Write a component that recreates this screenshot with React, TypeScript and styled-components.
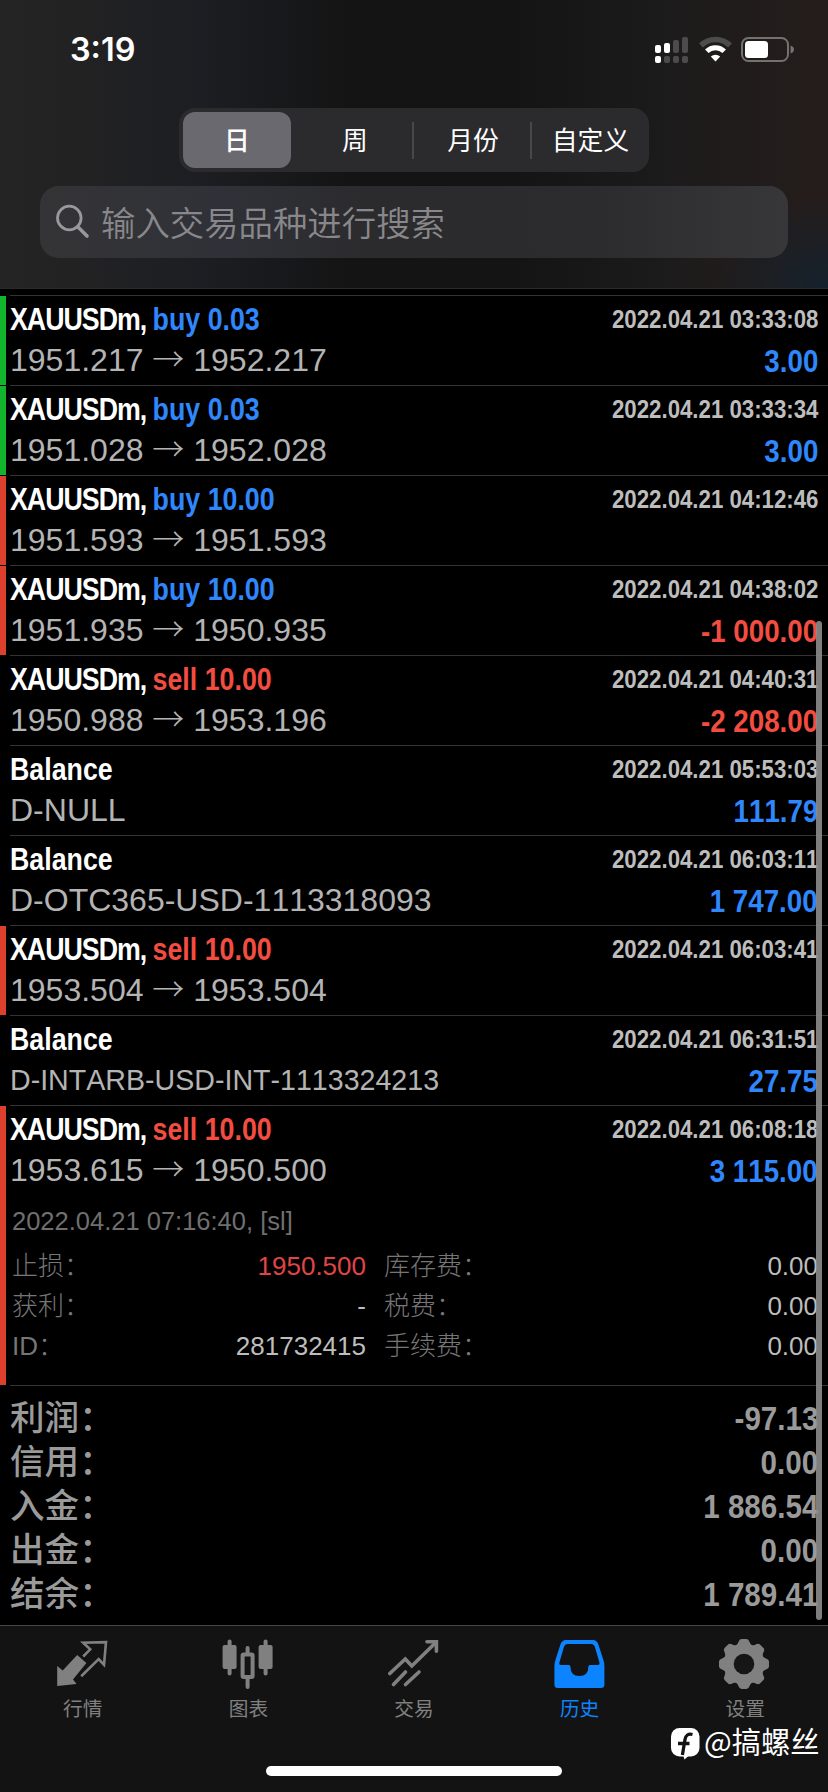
import React from "react";
import styled, { createGlobalStyle } from "styled-components";

const BLUE = "#2f87fb";
const RED = "#f24d40";

const GlobalStyle = createGlobalStyle`
  * { box-sizing: border-box; }
  body { margin: 0; background: #000; font-kerning: none; }
`;

const Screen = styled.main`
  width: 828px;
  height: 1792px;
  position: relative;
  display: flex;
  flex-direction: column;
  overflow: hidden;
  background: #000;
  font-family: "Liberation Sans", "Noto Sans CJK SC", sans-serif;
`;

const Header = styled.header`
  height: 289px;
  flex: none;
  display: flex;
  flex-direction: column;
  border-bottom: 1px solid #2a2a2a;
  background:
    radial-gradient(ellipse 110px 90px at 100% 100%, #15222d 0%, transparent 100%),
    linear-gradient(90deg, #242424 0%, #222223 10%, #1c1e23 24%, #141414 42%, #141414 62%, #1c1b1b 80%, #251d1c 100%);
`;

const StatusBar = styled.div`
  height: 108px;
  padding: 0 33px 0 70px;
  display: flex;
  justify-content: space-between;
`;

const Clock = styled.div`
  font: 600 32.4px/38px Inter, sans-serif;
  color: #fff;
  margin-top: 31px;
`;

const StatusIcons = styled.div`
  display: flex;
  margin-top: 36px;
`;

const Segments = styled.nav`
  align-self: center;
  width: 470px;
  height: 64px;
  display: flex;
  padding: 4px 0 4px 4px;
  border-radius: 16px;
  background: #2b2b2e;
`;

const Segment = styled.div<{ $active?: boolean; $divided?: boolean }>`
  width: ${(p) => (p.$active ? 108 : p.$divided ? 118 : 117)}px;
  margin-right: ${(p) => (p.$active ? 5 : 0)}px;
  padding-bottom: 3px;
  flex: none;
  display: flex;
  align-items: center;
  justify-content: center;
  border-radius: ${(p) => (p.$active ? "12px" : "0")};
  background: ${(p) =>
    p.$active
      ? "#69696f"
      : p.$divided
        ? "linear-gradient(#48484b, #48484b) right center / 2px 37px no-repeat"
        : "none"};
  color: #fff;
  font-family: "Noto Sans CJK SC", sans-serif;
  font-size: 25.8px;
  font-weight: ${(p) => (p.$active ? 500 : 400)};
  line-height: 38px;
`;

const SearchField = styled.div`
  margin: 14px 40px 0;
  height: 72px;
  border-radius: 19px;
  padding: 0 0 3px 15px;
  display: flex;
  align-items: center;
  gap: 11px;
  background: linear-gradient(90deg, #343436 0%, #303138 24%, #2b2b2d 45%, #2c2c2e 75%, #37373a 100%);
  color: #88888c;
  font-family: "Noto Sans CJK SC", sans-serif;
  font-size: 34.4px;
  font-weight: 350;
  line-height: 50px;
`;

const List = styled.section`
  padding-top: 6px;
  display: flex;
  flex-direction: column;
`;

const Deal = styled.article<{ $bar?: string; $tall?: boolean }>`
  height: ${(p) => (p.$tall ? 280 : 90)}px;
  padding: 1px 10px 0 10px;
  background:
    linear-gradient(#333, #333) 10px 0 / 100% 1px no-repeat,
    linear-gradient(${(p) => p.$bar ?? "#000"}, ${(p) => p.$bar ?? "#000"}) 0 1px / 6px 100% no-repeat;
`;

const Line = styled.div<{ $h: number }>`
  display: flex;
  justify-content: space-between;
  height: ${(p) => p.$h}px;
  line-height: ${(p) => p.$h}px;
  white-space: nowrap;
`;

const Title = styled.div`
  font-size: 31.5px;
  font-weight: 700;
  color: #fff;
  transform: scaleX(0.85);
  transform-origin: left;
`;

const Symbol = styled.span`
  letter-spacing: -1.2px;
`;

const Side = styled.span<{ $color: string }>`
  color: ${(p) => p.$color};
`;

const Stamp = styled.time`
  font-size: 26px;
  font-weight: 700;
  color: #bdbdbd;
  transform: scaleX(0.855);
  transform-origin: right;
`;

const Detail = styled.div<{ $size?: number }>`
  font-size: ${(p) => p.$size ?? 32}px;
  color: #b4b4b4;
`;

const Arrow = styled.span`
  font-family: "Noto Sans CJK SC", sans-serif;
  font-weight: 300;
  line-height: 0;
`;

const Profit = styled.div<{ $color: string }>`
  font-size: 31.5px;
  font-weight: 700;
  color: ${(p) => p.$color};
  transform: translateY(1px) scaleX(0.88);
  transform-origin: right;
`;

const ClosedAt = styled.div`
  margin-top: 12px;
  padding-left: 2px;
  height: 40px;
  font-size: 25.5px;
  line-height: 40px;
  color: #6f6f6f;
`;

const Facts = styled.dl`
  margin: 5px 0 0;
  padding-left: 2px;
  display: grid;
  grid-template-columns: 354px 1fr;
  column-gap: 18px;
  grid-auto-rows: 40px;
`;

const Fact = styled.div`
  display: flex;
  justify-content: space-between;
  font-size: 26px;
  line-height: 40px;
`;

const FactName = styled.dt`
  color: #767676;
  font-weight: 300;
`;

const FactValue = styled.dd<{ $color?: string }>`
  margin: 0;
  color: ${(p) => p.$color ?? "#bdbdbd"};
`;

const Totals = styled.section`
  height: 240px;
  padding: 11px 10px 0;
  background: linear-gradient(#333, #333) 10px 0 / 100% 1px no-repeat;
`;

const TotalName = styled.div`
  font-size: 34.6px;
  font-weight: 500;
  color: #9a9a9a;
`;

const TotalValue = styled.div`
  font-size: 34px;
  font-weight: 700;
  color: #9a9a9a;
  transform: scaleX(0.87);
  transform-origin: right;
`;

const TabBar = styled.nav`
  height: 167px;
  flex: none;
  display: grid;
  grid-template-columns: repeat(5, 1fr);
  padding-top: 14px;
  background: linear-gradient(#484848, #484848) 0 0 / 100% 1px no-repeat, #131313;
`;

const Tab = styled.div<{ $active?: boolean }>`
  display: flex;
  flex-direction: column;
  align-items: center;
  color: ${(p) => (p.$active ? "#0d84ff" : "#808080")};
  font: 400 19.7px/30px "Noto Sans CJK SC", sans-serif;
  gap: 2px;
`;

const HomeIndicator = styled.div`
  position: absolute;
  left: 266px;
  top: 1766px;
  width: 296px;
  height: 10px;
  border-radius: 5px;
  background: #fff;
`;

const ScrollThumb = styled.div`
  position: absolute;
  left: 816px;
  top: 621px;
  width: 6px;
  height: 999px;
  border-radius: 3px;
  background: rgba(140, 140, 140, 0.9);
`;

const Watermark = styled.div`
  position: absolute;
  left: 671px;
  top: 1719px;
  display: flex;
  align-items: flex-start;
  gap: 4px;
  white-space: nowrap;
  color: #fff;
  font: 400 29.3px/42px "Noto Sans CJK SC", sans-serif;

  svg {
    margin-top: 8px;
  }
`;

type DealRow = {
  side?: "buy" | "sell";
  volume?: string;
  open?: string;
  close?: string;
  note?: string;
  noteSize?: number;
  time: string;
  profit?: string;
  bar?: string;
};

const GREEN_BAR = "#12b62c";
const RED_BAR = "#dd402c";

const deals: DealRow[] = [
  { side: "buy", volume: "0.03", open: "1951.217", close: "1952.217", time: "2022.04.21 03:33:08", profit: "3.00", bar: GREEN_BAR },
  { side: "buy", volume: "0.03", open: "1951.028", close: "1952.028", time: "2022.04.21 03:33:34", profit: "3.00", bar: GREEN_BAR },
  { side: "buy", volume: "10.00", open: "1951.593", close: "1951.593", time: "2022.04.21 04:12:46", bar: RED_BAR },
  { side: "buy", volume: "10.00", open: "1951.935", close: "1950.935", time: "2022.04.21 04:38:02", profit: "-1 000.00", bar: RED_BAR },
  { side: "sell", volume: "10.00", open: "1950.988", close: "1953.196", time: "2022.04.21 04:40:31", profit: "-2 208.00" },
  { note: "D-NULL", time: "2022.04.21 05:53:03", profit: "111.79" },
  { note: "D-OTC365-USD-1113318093", time: "2022.04.21 06:03:11", profit: "1 747.00" },
  { side: "sell", volume: "10.00", open: "1953.504", close: "1953.504", time: "2022.04.21 06:03:41", bar: RED_BAR },
  { note: "D-INTARB-USD-INT-1113324213", noteSize: 28.6, time: "2022.04.21 06:31:51", profit: "27.75" },
  { side: "sell", volume: "10.00", open: "1953.615", close: "1950.500", time: "2022.04.21 06:08:18", profit: "3 115.00", bar: RED_BAR },
];

const facts = [
  ["止损：", "1950.500", "#e04545"],
  ["库存费：", "0.00"],
  ["获利：", "-"],
  ["税费：", "0.00"],
  ["ID：", "281732415"],
  ["手续费：", "0.00"],
];

const totals = [
  ["利润：", "-97.13"],
  ["信用：", "0.00"],
  ["入金：", "1 886.54"],
  ["出金：", "0.00"],
  ["结余：", "1 789.41"],
];

const StatusGlyphs = () => (
  <svg width="142" height="30" viewBox="653 36 142 30">
    <g fill="#fff">
      <rect x="655" y="45" width="6" height="8" rx="2" />
      <rect x="664" y="43" width="6" height="10" rx="2" />
      <rect x="655" y="56" width="6" height="7" rx="2" />
    </g>
    <g fill="#4d4c4c">
      <rect x="673" y="40" width="6" height="13" rx="2" />
      <rect x="682" y="37" width="6" height="16" rx="2" />
      <rect x="664" y="56" width="6" height="7" rx="2" />
      <rect x="673" y="56" width="6" height="7" rx="2" />
      <rect x="682" y="56" width="6" height="7" rx="2" />
    </g>
    <path d="M701 45.5a20.5 20.5 0 0 1 29 0" fill="none" stroke="#4d4c4c" strokeWidth="5.4" />
    <path d="M706.8 51.2a12.4 12.4 0 0 1 17.4 0" fill="none" stroke="#fff" strokeWidth="5" />
    <path d="M710.8 56.6a7 7 0 0 1 9.4 0L715.5 61.5Z" fill="#fff" />
    <rect x="742" y="38" width="46" height="23" rx="6.5" fill="none" stroke="#757170" strokeWidth="2" />
    <rect x="745" y="41" width="23" height="17" rx="3.5" fill="#fff" />
    <path d="M790.5 45.5q3.5 1.2 3.5 4t-3.5 4Z" fill="#757170" />
  </svg>
);

const SearchGlyph = () => (
  <svg width="35" height="36" viewBox="0 0 35 36" fill="none" stroke="#98989d" strokeLinecap="round">
    <circle cx="14.3" cy="15" r="11.8" strokeWidth="2.8" />
    <path d="M23 24l9 9" strokeWidth="3.6" />
  </svg>
);

const QuotesIcon = () => (
  <svg width="52" height="52" viewBox="56.8 1639 52 52">
    <path d="M57 1666l5.500 4.500 14.500-15.500 9.200 8-13.400 16.600 3.600 4.400L57 1686Z" fill="currentColor" />
    <path d="M83 1656.500l7-7.200-7-6.500 22.800-.6-2 22.600-5.300-5.800-17.500 17.200" fill="none" stroke="currentColor" strokeWidth="2.6" />
  </svg>
);

const ChartIcon = () => (
  <svg width="52" height="52" viewBox="222.400 1638 52 52">
    <g fill="currentColor">
      <rect x="223" y="1644" width="14" height="24" rx="2" />
      <rect x="228" y="1638.500" width="4" height="36" rx="2" />
      <rect x="259" y="1644" width="14" height="24" rx="2" />
      <rect x="264" y="1638.500" width="4" height="36" rx="2" />
      <rect x="246" y="1645" width="4" height="10" rx="2" />
      <rect x="246" y="1676" width="4" height="12" rx="2" />
    </g>
    <rect x="243" y="1653.500" width="10" height="22.500" rx="1" fill="none" stroke="currentColor" strokeWidth="4" />
  </svg>
);

const TradeIcon = () => (
  <svg width="52" height="52" viewBox="388 1639 52 52" fill="none" stroke="currentColor" strokeWidth="3.6" strokeLinecap="round">
    <path d="M389.800 1673.500l15.500-14.500 6.500 7 24-23.500" />
    <path d="M427 1641.800h9.400v9.400" />
    <path d="M393.500 1684.500l12-12.500M405.500 1684.500l13.500-12.500" />
  </svg>
);

const HistoryIcon = () => (
  <svg width="52" height="52" viewBox="553.100 1639 52 52">
    <path
      fillRule="evenodd"
      fill="currentColor"
      d="M565 1640h27q4 0 5.500 4.500l4.500 14q1.500 4 1.500 8v18q0 3.500-3.500 3.500h-43q-3.500 0-3.500-3.500v-18q0-4 1.500-8l4.500-14q1.500-4.500 5.500-4.500ZM567 1644q-3 0-4 3l-4.500 15.500q-.5 2.500 1.500 2.500h8q1.500 0 1.500 1.500 0 9.500 9 9.500t9-9.500q0-1.500 1.500-1.500h8q2 0 1.500-2.500l-4.500-15.500q-1-3-4-3Z"
    />
  </svg>
);

const SettingsIcon = () => (
  <svg width="52" height="52" viewBox="-25 -25 52 52">
    <g fill="currentColor">
      <circle r="20.500" />
      {[0, 45, 90, 135, 180, 225, 270, 315].map((a) => (
        <path key={a} d="M-8.500-18q2-1.300 3-4Q-4.700-25-2.500-25h5q2.200 0 3 3 1 2.700 3 4Z" transform={`rotate(${a})`} />
      ))}
    </g>
    <circle r="10.300" fill="#161616" />
  </svg>
);

const BrandGlyph = () => (
  <svg width="29" height="34" viewBox="0 0 29 34">
    <rect y="1" width="28.500" height="28.500" rx="8.500" fill="#fff" />
    <path d="M12 28l1.500 4.500 5-4.500Z" fill="#fff" />
    <path d="M21.500 7.500q-6.500-1.500-7.500 5l-2.600 15.500M7 16.500h11.500" fill="none" stroke="#131313" strokeWidth="3.300" />
  </svg>
);

const tabs = [
  { label: "行情", icon: <QuotesIcon /> },
  { label: "图表", icon: <ChartIcon /> },
  { label: "交易", icon: <TradeIcon /> },
  { label: "历史", icon: <HistoryIcon />, active: true },
  { label: "设置", icon: <SettingsIcon /> },
];

function DealItem({ deal, children }: { deal: DealRow; children?: React.ReactNode }) {
  return (
    <Deal $bar={deal.bar} $tall={Boolean(children)}>
      <Line $h={46}>
        {deal.side ? (
          <Title>
            <Symbol>XAUUSDm, </Symbol>
            <Side $color={deal.side === "buy" ? BLUE : RED}>
              {deal.side} {deal.volume}
            </Side>
          </Title>
        ) : (
          <Title>Balance</Title>
        )}
        <Stamp>{deal.time}</Stamp>
      </Line>
      <Line $h={37}>
        {deal.note ? (
          <Detail $size={deal.noteSize}>{deal.note}</Detail>
        ) : (
          <Detail>
            {deal.open} <Arrow>→</Arrow> {deal.close}
          </Detail>
        )}
        {deal.profit && <Profit $color={deal.profit.startsWith("-") ? RED : BLUE}>{deal.profit}</Profit>}
      </Line>
      {children}
    </Deal>
  );
}

export default function App() {
  return (
    <Screen>
      <GlobalStyle />
      <Header>
        <StatusBar>
          <Clock>3:19</Clock>
          <StatusIcons>
            <StatusGlyphs />
          </StatusIcons>
        </StatusBar>
        <Segments>
          <Segment $active>日</Segment>
          <Segment $divided>周</Segment>
          <Segment $divided>月份</Segment>
          <Segment>自定义</Segment>
        </Segments>
        <SearchField>
          <SearchGlyph />
          输入交易品种进行搜索
        </SearchField>
      </Header>
      <List>
        {deals.map((deal, i) => (
          <DealItem key={deal.time} deal={deal}>
            {i === deals.length - 1 && (
              <>
                <ClosedAt>2022.04.21 07:16:40, [sl]</ClosedAt>
                <Facts>
                  {facts.map(([name, value, color]) => (
                    <Fact key={name}>
                      <FactName>{name}</FactName>
                      <FactValue $color={color}>{value}</FactValue>
                    </Fact>
                  ))}
                </Facts>
              </>
            )}
          </DealItem>
        ))}
      </List>
      <Totals>
        {totals.map(([name, value]) => (
          <Line key={name} $h={44}>
            <TotalName>{name}</TotalName>
            <TotalValue>{value}</TotalValue>
          </Line>
        ))}
      </Totals>
      <TabBar>
        {tabs.map((tab) => (
          <Tab key={tab.label} $active={tab.active}>
            {tab.icon}
            {tab.label}
          </Tab>
        ))}
      </TabBar>
      <ScrollThumb />
      <HomeIndicator />
      <Watermark>
        <BrandGlyph />
        @搞螺丝
      </Watermark>
    </Screen>
  );
}
